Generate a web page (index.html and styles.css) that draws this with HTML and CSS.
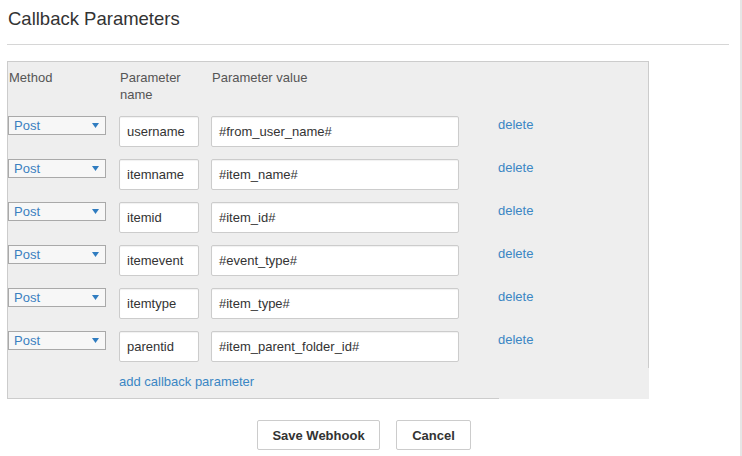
FILE: index.html
```html
<!DOCTYPE html>
<html>
<head>
<meta charset="utf-8">
<link rel="stylesheet" href="styles.css">
</head>
<body>
<div class="frame">
  <h2 class="title">Callback Parameters</h2>
  <div class="rule"></div>
  <div class="params">
    <div class="grid head">
      <div class="label">Method</div>
      <div class="label">Parameter<br>name</div>
      <div class="label">Parameter value</div>
      <div></div>
    </div>
    <div class="rows">
      <div class="grid row">
        <div class="select">Post<svg class="caret" width="7" height="5" viewBox="0 0 7 5"><path d="M0 0H7L3.5 5Z"/></svg></div>
        <div class="input name">username</div>
        <div class="input value">#from_user_name#</div>
        <a class="link">delete</a>
      </div>
      <div class="grid row">
        <div class="select">Post<svg class="caret" width="7" height="5" viewBox="0 0 7 5"><path d="M0 0H7L3.5 5Z"/></svg></div>
        <div class="input name">itemname</div>
        <div class="input value">#item_name#</div>
        <a class="link">delete</a>
      </div>
      <div class="grid row">
        <div class="select">Post<svg class="caret" width="7" height="5" viewBox="0 0 7 5"><path d="M0 0H7L3.5 5Z"/></svg></div>
        <div class="input name">itemid</div>
        <div class="input value">#item_id#</div>
        <a class="link">delete</a>
      </div>
      <div class="grid row">
        <div class="select">Post<svg class="caret" width="7" height="5" viewBox="0 0 7 5"><path d="M0 0H7L3.5 5Z"/></svg></div>
        <div class="input name">itemevent</div>
        <div class="input value">#event_type#</div>
        <a class="link">delete</a>
      </div>
      <div class="grid row">
        <div class="select">Post<svg class="caret" width="7" height="5" viewBox="0 0 7 5"><path d="M0 0H7L3.5 5Z"/></svg></div>
        <div class="input name">itemtype</div>
        <div class="input value">#item_type#</div>
        <a class="link">delete</a>
      </div>
      <div class="grid row">
        <div class="select">Post<svg class="caret" width="7" height="5" viewBox="0 0 7 5"><path d="M0 0H7L3.5 5Z"/></svg></div>
        <div class="input name">parentid</div>
        <div class="input value">#item_parent_folder_id#</div>
        <a class="link">delete</a>
      </div>
    </div>
    <a class="link add">add callback parameter</a>
  </div>
  <div class="actions">
    <button class="btn save">Save Webhook</button>
    <button class="btn cancel">Cancel</button>
  </div>
</div>
</body>
</html>
```
FILE: styles.css
```css
* { box-sizing: border-box; }
html, body { margin: 0; padding: 0; background: #fff; }
body {
  font-family: "Liberation Sans", Arial, sans-serif;
  font-size: 13px;
  color: #333;
}
.frame {
  width: 742px;
  height: 456px;
  padding: 7px 0 0 7px;
  border-right: 2px solid #e6e6e6;
  overflow: hidden;
}
.title {
  margin: 0 0 0 1px;
  font-size: 18.5px;
  line-height: 24px;
  font-weight: normal;
  color: #333;
}
.rule {
  width: 722px;
  height: 1px;
  background: #d6d6d6;
  margin-top: 13px;
}
.params {
  position: relative;
  margin-top: 16px;
  width: 642px;
  background: #eee;
  border-left: 1px solid #ccc;
  border-top: 1px solid #ccc;
  padding: 7px 0 9px 0;
}
.params::before {
  content: "";
  position: absolute;
  right: 0;
  top: -1px;
  width: 1px;
  height: 307px;
  background: #ccc;
}
.params::after {
  content: "";
  position: absolute;
  left: -1px;
  bottom: 0;
  width: 492px;
  height: 1px;
  background: #ccc;
}
.grid {
  display: grid;
  grid-template-columns: 111px 92px 287px auto;
  line-height: 17px;
}
.label {
  color: #555;
  padding-left: 1px;
}
.head { height: 34px; }
.rows {
  margin-top: 13px;
  display: flex;
  flex-direction: column;
  gap: 12px;
}
.row { height: 31px; align-items: start; }
.select {
  width: 98px;
  height: 19px;
  border: 1px solid #a9a9a9;
  background: #f7f7f7;
  color: #3b7fc0;
  padding-left: 5px;
  display: flex;
  align-items: center;
  justify-content: space-between;
  padding-right: 6px;
}
.caret { fill: #2f7cc0; display: block; }
.input {
  height: 31px;
  border: 1px solid #ccc;
  border-radius: 2px;
  background: #fff;
  box-shadow: inset 0 1px 1px rgba(0,0,0,0.06);
  color: #333;
  padding: 0 7px;
  display: flex;
  align-items: center;
  white-space: nowrap;
}
.name { width: 80px; }
.value { width: 248px; }
.link {
  color: #3a86c4;
  text-decoration: none;
  cursor: pointer;
}
.add {
  display: block;
  margin-top: 11px;
  padding-left: 111px;
  line-height: 17px;
}
.actions {
  width: 714px;
  margin-top: 21px;
  display: flex;
  justify-content: center;
  gap: 16px;
}
.btn {
  height: 30px;
  padding: 0;
  white-space: nowrap;
  background: #fff;
  border: 1px solid #ccc;
  border-radius: 2px;
  font-family: "Liberation Sans", Arial, sans-serif;
  font-size: 13px;
  font-weight: bold;
  color: #333;
}
.save { width: 123px; }
.cancel { width: 75px; }
```
